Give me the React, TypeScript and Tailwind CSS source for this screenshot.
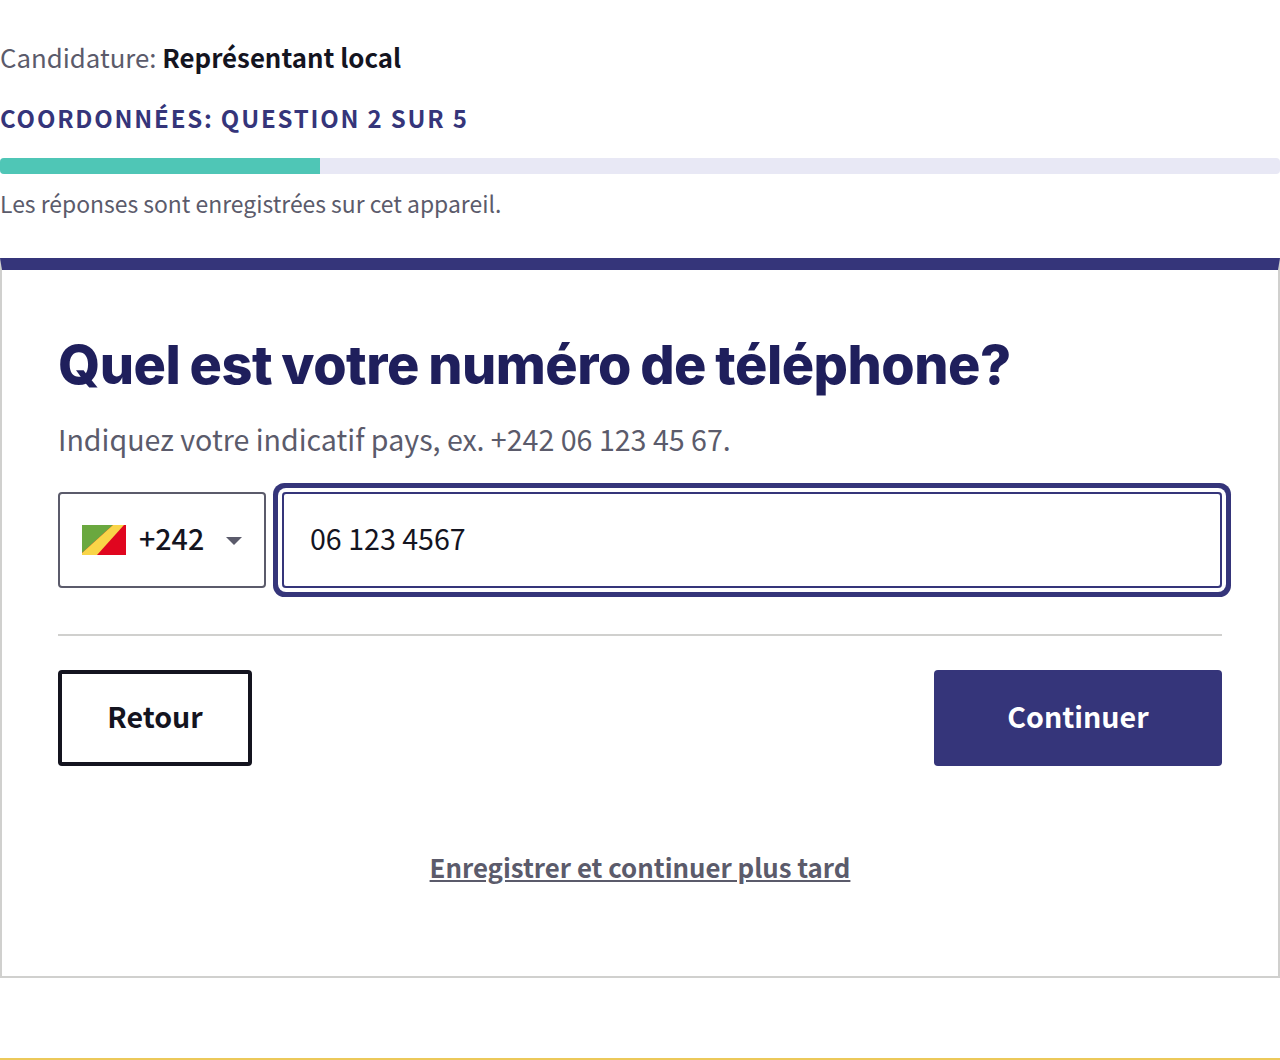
const sans = "font-['Noto_Sans_CJK_SC','Noto_Sans',sans-serif]";

function Flag() {
    return (
        <svg width="44" height="30" viewBox="0 0 44 30" className="shrink-0">
            <rect width="44" height="30" fill="#e0061f" />
            <path d="M0 0H31L0 28Z" fill="#6aa83f" />
            <path d="M31 0H42L15 30H0V28Z" fill="#f9d548" />
        </svg>
    );
}

export default function App() {
    return (
        <div className={`${sans} w-[1280px] h-[1060px] bg-white flex flex-col overflow-hidden`}>
            <div className="pt-[39px] h-[258px] shrink-0">
                <p className="text-[25.8px] leading-[36px] text-[#5b5b6b]">
                    Candidature: <span className="font-bold text-[#14141f]">Représentant local</span>
                </p>
                <p className="mt-[27px] text-[24px] leading-[32px] font-bold tracking-[1.8px] text-[#35357a]">
                    COORDONNÉES: QUESTION 2 SUR 5
                </p>
                <div className="mt-[24px] h-[16px] bg-[#e8e8f5] rounded-[4px] overflow-hidden">
                    <div className="w-1/4 h-full bg-[#4fc6b6]" />
                </div>
                <p className="mt-[11px] text-[22.9px] leading-[36px] text-[#5b5b6b]">
                    Les réponses sont enregistrées sur cet appareil.
                </p>
            </div>

            <div className="h-[720px] shrink-0 border-2 border-[#d0d0ce] border-t-[12px] border-t-[#35357a] px-[56px] pt-[62px]">
                <h1 className="font-['Inter',sans-serif] text-[54px] leading-[66px] font-extrabold tracking-[-0.5px] [word-spacing:-2px] text-[#1f1f5c]">
                    Quel est votre numéro de téléphone?
                </h1>
                <p className="mt-[21px] text-[28.6px] leading-[40px] text-[#5b5b6b]">
                    Indiquez votre indicatif pays, ex. +242 06 123 45 67.
                </p>

                <div className="mt-[33px] flex gap-[16px]">
                    <div className="w-[208px] h-[96px] border-2 border-[#5b5b6b] rounded-[4px] flex items-center pl-[22px]">
                        <Flag />
                        <span className="ml-[13px] pb-[4px] text-[28.6px] text-[#14141f] font-medium">+242</span>
                        <svg width="16" height="8" viewBox="0 0 16 8" className="ml-[22px] mt-[2px]">
                            <path d="M0 0H16L8 8Z" fill="#5b5b6b" />
                        </svg>
                    </div>
                    <div className="flex-1 h-[96px] border-2 border-[#35357a] rounded-[4px] flex items-center px-[26px] pb-[4px] text-[28.6px] text-[#14141f] shadow-[0_0_0_4px_#ffffff,0_0_0_9px_#35357a]">
                        06 123 4567
                    </div>
                </div>

                <div className="mt-[46px] h-[2px] bg-[#d0d0ce]" />

                <div className="mt-[34px] flex justify-between">
                    <button className="w-[194px] h-[96px] border-[4px] border-[#14141f] rounded-[4px] pb-[4px] text-[28.6px] font-bold text-[#14141f]">
                        Retour
                    </button>
                    <button className="w-[288px] h-[96px] bg-[#35357a] rounded-[4px] pb-[4px] text-[28.6px] font-bold text-white">
                        Continuer
                    </button>
                </div>

                <div className="mt-[81px] text-center">
                    <a className="text-[25.8px] leading-[40px] font-bold text-[#5b5b6b] underline">
                        Enregistrer et continuer plus tard
                    </a>
                </div>
            </div>

            <div className="mt-auto h-[2px] bg-[#ecc95a]" />
        </div>
    );
}
